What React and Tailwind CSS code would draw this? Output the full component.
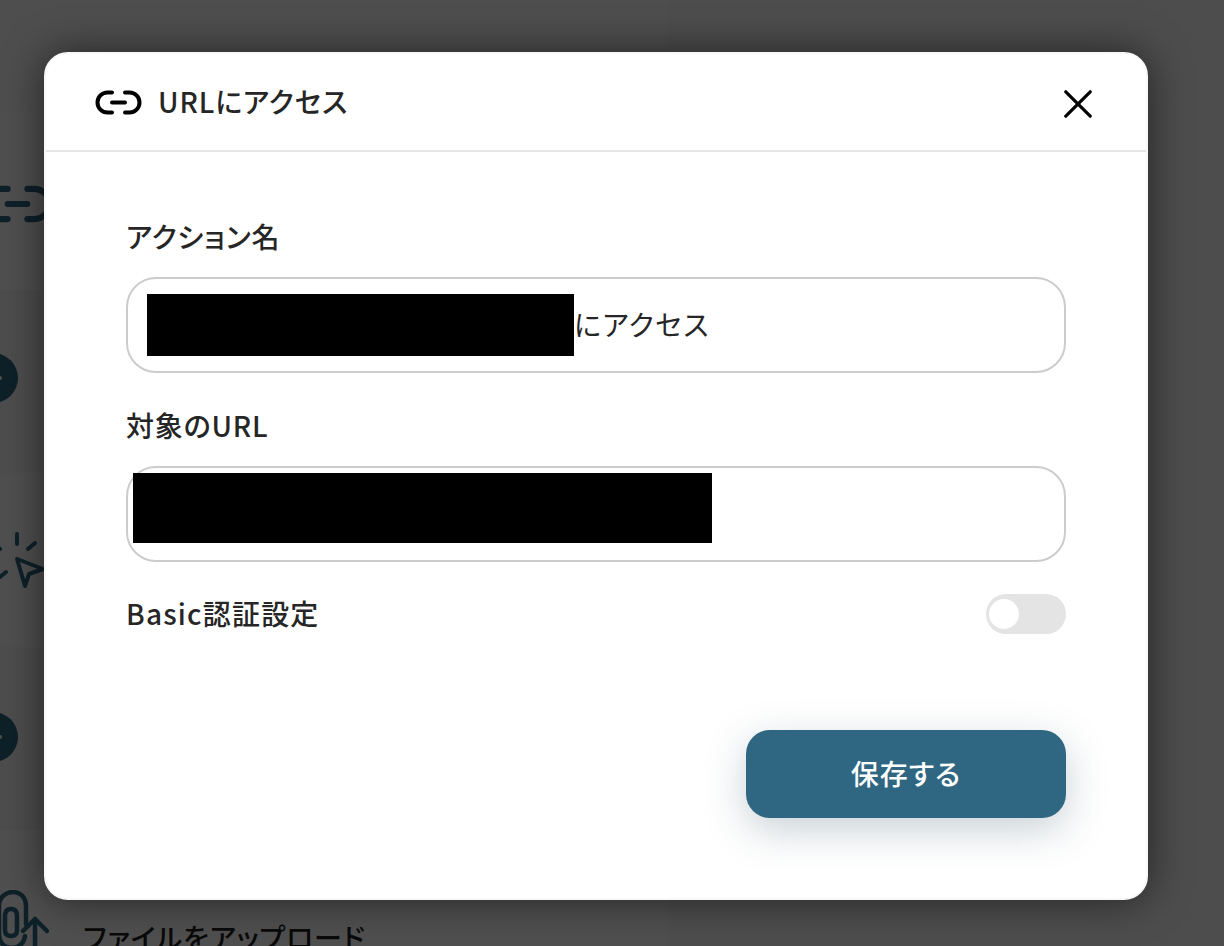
import React from "react";

const LinkIcon = ({ className }) => (
  <svg viewBox="0 0 47 25" fill="none" stroke="currentColor" strokeWidth="4" strokeLinecap="round" className={className}>
    <path d="M17 2.5H12.5a10 10 0 0 0 0 20H17" />
    <path d="M30 2.5H34.5a10 10 0 0 1 0 20H30" />
    <path d="M17 12.5H30" />
  </svg>
);

const CircleBadge = () => (
  <div className="w-[50px] h-[50px] rounded-full bg-[#2f6782] flex items-center justify-center">
    <div className="w-[4px] h-[4px] rounded-full bg-white ml-[14px]" />
  </div>
);

const ClickIcon = () => (
  <svg viewBox="0 0 60 60" fill="none" stroke="#2f6782" strokeWidth="4" strokeLinecap="round" strokeLinejoin="round" className="w-[60px] h-[60px]">
    <path d="M30 4V14" />
    <path d="M41 19L48 13" />
    <path d="M13 19L7 13" />
    <path d="M19 42L13 47" />
    <path d="M30 29L56 39L42 44L38 56Z" />
  </svg>
);

const UploadIcon = () => (
  <svg viewBox="0 0 52 60" fill="none" stroke="#2f6782" strokeWidth="4.5" strokeLinecap="round" strokeLinejoin="round" className="w-[52px] h-[60px] shrink-0">
    <path d="M29 34V16C29 7 23 2 16 2S2 7 2 16V44C2 52 7 58 15 58C22 58 27 53 28 46" />
    <path d="M20 40V26C20 21 18 19 14 19S8 21 8 26V40C8 44 10 46 14 46S20 44 20 40Z" />
    <path d="M38 60V30" />
    <path d="M26 41L38 29L50 41" />
  </svg>
);

// the list of actions that sits behind the dialog
const BackgroundList = () => (
  <div className="w-[668px] shrink-0 pt-[113px] bg-[#fbfbfb]">
    <div className="h-[177px] flex items-center bg-white -ml-[18px] text-[#2f6782]">
      <LinkIcon className="w-[71px] h-[38px] mt-[4px]" />
    </div>
    <div className="h-[183px] flex items-start pt-[63px] bg-[#f7f8f8] -ml-[32px]">
      <CircleBadge />
    </div>
    <div className="h-[174px] flex items-start pt-[57px] bg-white -ml-[13px]">
      <ClickIcon />
    </div>
    <div className="h-[183px] flex items-start pt-[65px] bg-[#f7f8f8] -ml-[32px]">
      <CircleBadge />
    </div>
    <div className="h-[116px] flex items-start gap-[34px] pt-[60px] bg-white -ml-[3px] overflow-hidden">
      <UploadIcon />
      <p className="text-[28px] leading-[36px] font-medium tracking-[0.8px] text-[#222] mt-[29px] whitespace-nowrap">ファイルをアップロード</p>
    </div>
  </div>
);

const Field = ({ label, children }) => (
  <div>
    <label className="block text-[28px] leading-[36px] font-medium tracking-[0.8px] text-[#262626] mb-[23px]">{label}</label>
    <div className="h-[96px] rounded-[30px] border-2 border-[#cccccc] flex items-center bg-white">
      {children}
    </div>
  </div>
);

export default function App() {
  return (
    <div className="relative w-[1224px] h-[946px] overflow-hidden flex bg-[#f6f8f6] font-['Noto_Sans_CJK_JP','Noto_Sans',sans-serif] [font-feature-settings:'palt']">
      <BackgroundList />

      {/* overlay + dialog */}
      <div className="absolute inset-0 bg-black/[.69] pt-[52px] pl-[44px]">
        <div className="w-[1104px] h-[848px] bg-white rounded-[24px] border-2 border-[#f8f8f8] shadow-[0_0_40px_rgba(0,0,0,0.55)]">
          <div className="h-[98px] border-b-2 border-[#e5e5e5] flex items-center justify-between pl-[49px] pr-[54px]">
            <div className="flex items-center gap-[16px] text-black">
              <LinkIcon className="w-[47px] h-[25px]" />
              <span className="text-[28px] leading-[36px] font-medium tracking-[0.9px] text-[#262626] mb-[2px]">URLにアクセス</span>
            </div>
            <svg viewBox="0 0 28 28" fill="none" stroke="black" strokeWidth="3.2" strokeLinecap="round" className="w-[28px] h-[28px] mt-[3px]">
              <path d="M1.8 1.8L26.2 26.2" />
              <path d="M26.2 1.8L1.8 26.2" />
            </svg>
          </div>

          <div className="px-[80px] pt-[66px]">
            <Field label="アクション名">
              <div className="w-[427px] h-[62px] bg-black ml-[19px]" />
              <span className="text-[28px] tracking-[1.5px] text-[#262626] pb-[2px]">にアクセス</span>
            </Field>

            <div className="mt-[34px]">
              <Field label="対象のURL">
                <div className="w-[579px] h-[70px] bg-black ml-[5px] self-start mt-[5px]" />
              </Field>
            </div>

            <div className="mt-[32px] flex items-center justify-between">
              <span className="text-[28px] leading-[36px] font-medium tracking-[1.2px] text-[#262626] mb-[2px]">Basic認証設定</span>
              <div className="w-[80px] h-[40px] rounded-full bg-[#e4e4e4] flex items-center pl-[3px]">
                <div className="w-[30px] h-[30px] rounded-full bg-white" />
              </div>
            </div>

            <div className="mt-[96px] flex justify-end">
              <button className="w-[320px] h-[88px] rounded-[24px] bg-[#2f6782] text-white text-[28px] font-medium tracking-[1px] pb-[2px] shadow-[0_12px_40px_rgba(40,70,90,0.25)]">
                保存する
              </button>
            </div>
          </div>
        </div>
      </div>
    </div>
  );
}
